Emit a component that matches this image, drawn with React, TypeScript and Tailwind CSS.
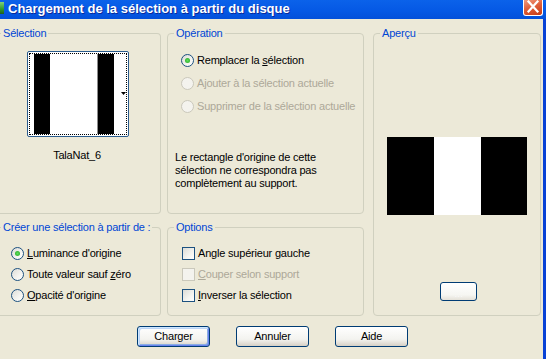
import React from "react";

function Radio({ checked = false, disabled = false }: { checked?: boolean; disabled?: boolean }) {
  return (
    <span
      className={
        disabled
          ? "flex items-center justify-center w-[13px] h-[13px] rounded-full border border-[#cac8bb] bg-[#f4f3ee] shrink-0"
          : "flex items-center justify-center w-[13px] h-[13px] rounded-full border border-[#1c5180] bg-[linear-gradient(135deg,#dcdcd7_0%,#f4f4f0_60%,#ffffff_100%)] shrink-0"
      }
    >
      {checked && (
        <span className="w-[5px] h-[5px] rounded-full bg-[radial-gradient(circle,#5ee05a_0%,#21a121_100%)]" />
      )}
    </span>
  );
}

function Check({ disabled = false }: { disabled?: boolean }) {
  return (
    <span
      className={
        disabled
          ? "w-[13px] h-[13px] border border-[#cac8bb] bg-[#f4f3ee] shrink-0"
          : "w-[13px] h-[13px] border border-[#1c5180] bg-[linear-gradient(135deg,#dcdcd7_0%,#f4f4f0_60%,#ffffff_100%)] shrink-0"
      }
    />
  );
}

function U({ children }: { children: React.ReactNode }) {
  return <span className="underline underline-offset-[1px]">{children}</span>;
}

export default function App() {
  return (
    <div className="w-[546px] h-[359px] overflow-hidden bg-[#ece9d8] font-['Liberation_Sans',Arial,sans-serif] text-[11px] leading-[13px] tracking-[-0.2px] text-black flex flex-col">
      {/* Title bar */}
      <div className="h-[19px] shrink-0 flex items-start bg-[linear-gradient(180deg,#0b62ea_0%,#0559e5_55%,#0350da_100%)]">
        <div className="w-[4px] h-[12px] mt-[2px] bg-[linear-gradient(180deg,#7fd07a_0%,#2f9a2c_60%,#1f5f1e_100%)]" />
        <span className="ml-[4px] text-white font-bold text-[13px] leading-[17px] tracking-normal [text-shadow:1px_1px_0_#0a2a9a] whitespace-nowrap">
          Chargement de la sélection à partir du disque
        </span>
        <div className="ml-auto mr-[3px] w-[20px] h-[16px] border border-t-0 border-white rounded-b-[3px] bg-[linear-gradient(160deg,#ef9a7e_0%,#e0603c_45%,#c73a14_100%)] flex items-center justify-center">
          <svg width="18" height="15" viewBox="0 0 18 15">
            <path d="M4.5 1.5 L13.5 11.5 M13.5 1.5 L4.5 11.5" stroke="#ffffff" strokeWidth="2.2" strokeLinecap="square" />
          </svg>
        </div>
      </div>

      <div className="flex flex-1 min-h-0">
        <div className="flex-1 min-w-0 flex flex-col">
          <div className="flex pt-[8px]">
            {/* Left column */}
            <div className="-ml-[6px] w-[167px] shrink-0 flex flex-col gap-[7px]">
              <fieldset className="m-0 p-0 min-w-0 h-[187px] border border-l-0 border-[#d0d0bf] rounded-[4px]">
                <legend className="ml-[7px] px-[2px] text-[#0046d5] leading-[13px]">Sélection</legend>
                <div className="ml-[33px] mt-[11px] w-[102px] h-[86px] border border-[#2a5b8c] rounded-[2px] bg-white p-[1px]">
                  <div className="w-full h-full border border-dotted border-black flex items-stretch">
                    <div className="w-[4px] bg-white" />
                    <div className="w-[16px] bg-black" />
                    <div className="w-[47px] bg-white" />
                    <div className="w-[1px] bg-[#8c8c8c]" />
                    <div className="w-[16px] bg-black" />
                    <div className="flex-1 bg-white flex items-center justify-end">
                      <svg width="5" height="3" viewBox="0 0 5 3" className="mb-[1px]">
                        <path d="M0 0 H5 L2.5 3 Z" fill="#000000" />
                      </svg>
                    </div>
                  </div>
                </div>
                <div className="mt-[12px] text-center">TalaNat_6</div>
              </fieldset>
              <fieldset className="m-0 p-0 min-w-0 h-[95px] border border-l-0 border-[#d0d0bf] rounded-[4px]">
                <legend className="ml-[7px] px-[2px] text-[#0046d5] leading-[13px]">Créer une sélection à partir de :</legend>
                <div className="pt-[13px] pl-[17px] flex flex-col gap-[8px]">
                  <div className="flex items-center gap-[3px] h-[13px]">
                    <Radio checked />
                    <span><U>L</U>uminance d'origine</span>
                  </div>
                  <div className="flex items-center gap-[3px] h-[13px]">
                    <Radio />
                    <span>Toute valeur sauf <U>z</U>éro</span>
                  </div>
                  <div className="flex items-center gap-[3px] h-[13px]">
                    <Radio />
                    <span><U>O</U>pacité d'origine</span>
                  </div>
                </div>
              </fieldset>
            </div>

            {/* Middle column */}
            <div className="ml-[6px] w-[197px] shrink-0 flex flex-col gap-[7px]">
              <fieldset className="m-0 p-0 min-w-0 h-[187px] border border-[#d0d0bf] rounded-[4px]">
                <legend className="ml-[6px] px-[2px] text-[#0046d5] leading-[13px]">Opération</legend>
                <div className="pt-[14px] pl-[13px] flex flex-col gap-[10px]">
                  <div className="flex items-center gap-[3px] h-[13px]">
                    <Radio checked />
                    <span>Remplacer la <U>s</U>élection</span>
                  </div>
                  <div className="flex items-center gap-[3px] h-[13px] text-[#aca899]">
                    <Radio disabled />
                    <span>Ajouter à la sélection actuelle</span>
                  </div>
                  <div className="flex items-center gap-[3px] h-[13px] text-[#aca899]">
                    <Radio disabled />
                    <span>Supprimer de la sélection actuelle</span>
                  </div>
                </div>
                <p className="mt-[38px] pl-[7px] whitespace-nowrap">
                  Le rectangle d'origine de cette
                  <br />
                  sélection ne correspondra pas
                  <br />
                  complètement au support.
                </p>
              </fieldset>
              <fieldset className="m-0 p-0 min-w-0 h-[95px] border border-[#d0d0bf] rounded-[4px]">
                <legend className="ml-[6px] px-[2px] text-[#0046d5] leading-[13px]">Options</legend>
                <div className="pt-[13px] pl-[14px] flex flex-col gap-[8px]">
                  <div className="flex items-center gap-[3px] h-[13px]">
                    <Check />
                    <span>Angle supérieur gauche</span>
                  </div>
                  <div className="flex items-center gap-[3px] h-[13px] text-[#aca899]">
                    <Check disabled />
                    <span><U>C</U>ouper selon support</span>
                  </div>
                  <div className="flex items-center gap-[3px] h-[13px]">
                    <Check />
                    <span><U>I</U>nverser la sélection</span>
                  </div>
                </div>
              </fieldset>
            </div>

            {/* Right column */}
            <fieldset className="ml-[9px] m-0 p-0 min-w-0 w-[168px] h-[289px] shrink-0 border border-[#d0d0bf] rounded-[4px]">
              <legend className="ml-[6px] px-[2px] text-[#0046d5] leading-[13px]">Aperçu</legend>
              <div className="mt-[97px] ml-[13px] flex w-[140px] h-[78px]">
                <div className="w-[47px] bg-black" />
                <div className="w-[47px] bg-white" />
                <div className="w-[46px] bg-black" />
              </div>
              <button className="mt-[67px] ml-[66px] w-[37px] h-[19px] border border-[#003c74] rounded-[3px] bg-[linear-gradient(180deg,#ffffff_0%,#f6f6f2_70%,#e4e1d8_100%)] text-[#f8f8f8] text-[11px] leading-[13px] flex items-end justify-center">
                ...
              </button>
            </fieldset>
          </div>

          {/* Buttons */}
          <div className="flex justify-center gap-[26px] mt-[10px] pl-[2px]">
            <button className="w-[73px] h-[21px] border border-[#003c74] rounded-[3px] bg-[linear-gradient(180deg,#ffffff_0%,#f3f3ef_65%,#d6d0c5_100%)] shadow-[inset_1px_1px_0_#cee7ff,inset_-1px_-1px_0_#6982ee,inset_2px_2px_0_#bcd4f6,inset_-2px_-2px_0_#89ade4] text-[11px] leading-[13px] text-black">
              Charger
            </button>
            <button className="w-[73px] h-[21px] border border-[#003c74] rounded-[3px] bg-[linear-gradient(180deg,#ffffff_0%,#f3f3ef_65%,#d6d0c5_100%)] text-[11px] leading-[13px] text-black">
              Annuler
            </button>
            <button className="w-[73px] h-[21px] border border-[#003c74] rounded-[3px] bg-[linear-gradient(180deg,#ffffff_0%,#f3f3ef_65%,#d6d0c5_100%)] text-[11px] leading-[13px] text-black">
              Aide
            </button>
          </div>
        </div>
        <div className="w-[3px] shrink-0 bg-[#0842d6]" />
      </div>
    </div>
  );
}
